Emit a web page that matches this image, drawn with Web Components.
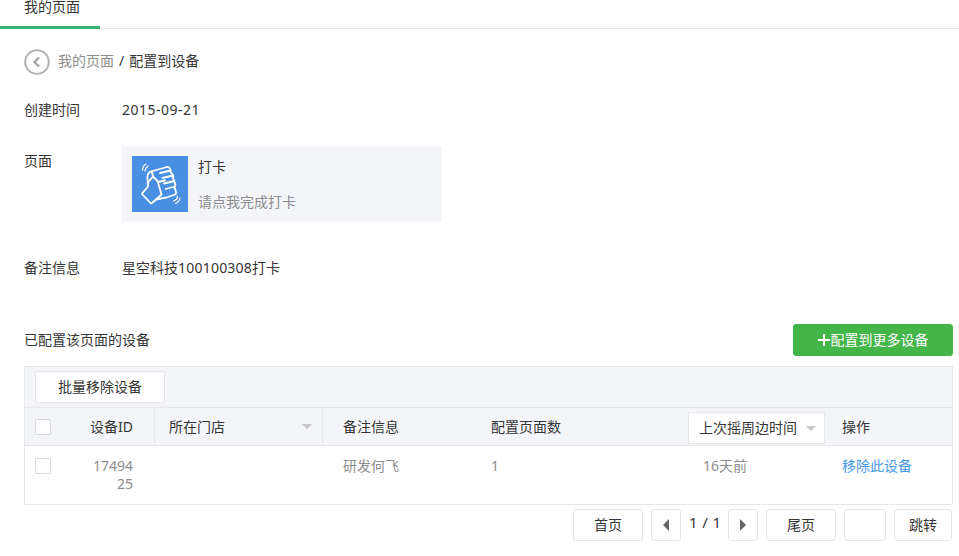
<!DOCTYPE html>
<html lang="zh">
<head>
<meta charset="utf-8">
<title>配置到设备</title>
<style>
  html, body { margin: 0; padding: 0; background: #fff; }
  body { width: 959px; height: 556px; overflow: hidden; font: 14px/20px "Noto Sans", "Noto Sans CJK SC", sans-serif; color: #353535; }
</style>
</head>
<body>
<page-tabs label="我的页面"></page-tabs>
<main-view></main-view>

<script>
class PageTabs extends HTMLElement {
  constructor () {
    super();
    this.attachShadow({ mode: 'open' });
    this.shadowRoot.innerHTML = `<style>
        :host { display: block; height: 29px; border-bottom: 1px solid #e7e7eb; box-sizing: border-box; }
        .tab {
          display: block;
          width: 100px;
          height: 29px;
          box-sizing: border-box;
          padding-left: 24px;
          line-height: 14px;
          color: #353535;
          border-bottom: 3px solid #3cb371;
        }
      </style>
      <div class="tab">${this.getAttribute('label')}</div>`;
  }
}

class BackCrumb extends HTMLElement {
  constructor () {
    super();
    this.attachShadow({ mode: 'open' });
    this.shadowRoot.innerHTML = `<style>
        :host { display: flex; align-items: center; height: 26px; }
        svg { width: 26px; height: 26px; margin-right: 8px; flex: none; }
        span { margin-bottom: 2px; }
        .parent { color: #8d8d8d; }
        .sep { margin: 0 5px 2px 5px; }
      </style>
      <svg viewBox="0 0 26 26" fill="none" stroke="#b2b2b2" stroke-width="2">
        <circle cx="13" cy="13" r="11.8"/>
        <path d="M15 8.500 10.500 13l4.500 4.500" stroke="#a5a5a5" stroke-width="2.400"/>
      </svg>
      <span class="parent">我的页面</span><span class="sep">/</span><span>配置到设备</span>`;
  }
}

class InfoRow extends HTMLElement {
  constructor () {
    super();
    this.attachShadow({ mode: 'open' });
    this.shadowRoot.innerHTML = `<style>
        :host { display: grid; grid-template-columns: 98px 1fr; line-height: 20px; }
      </style>
      <div>${this.getAttribute('label')}</div>
      <div><slot></slot></div>`;
  }
}

class PageCard extends HTMLElement {
  constructor () {
    super();
    this.attachShadow({ mode: 'open' });
    this.shadowRoot.innerHTML = `<style>
        :host { display: flex; width: 320px; height: 76px; box-sizing: border-box; padding: 10px; background: #f4f5f9; }
        .icon { width: 56px; height: 56px; flex: none; margin-right: 10px; background: #4a90e2; }
        .body { display: flex; flex-direction: column; justify-content: space-between; height: 55px; margin-top: 1px; }
        .sub { color: #8d8d8d; }
      </style>
      <svg class="icon" viewBox="0 0 56 56" fill="none" stroke="#fff" stroke-width="1.800" stroke-linecap="round" stroke-linejoin="round">
        <path d="M15.500 22C15 19 16.500 16 19 15.500L35 11C36.500 10.700 37.500 11.500 38 13L39 17C41 18 41.500 20 41 22L42.500 26.500C43.500 28 43.500 30 42.500 31L44 36C44.500 37.500 43.500 38.500 42 39L34.500 41.500 24 43.500 20 47C19.500 47.500 19 47.500 18.500 47L10.500 38.500C10 38 10 37.500 10.500 37L16 30.500 15.500 22Z"/>
        <path d="M15.500 27 21 20.500 25.500 25 29.500 38.500 24 43.500"/>
        <path d="M21 20.500 20 16"/>
        <path d="M28 17 38.500 14.500M30.500 22 41 19.500M32 27.500 42.500 25M33.500 33 43 30.500M26 26 33 24.500"/>
        <path d="M13 15C13.300 12.500 14.500 11 16 10M10.500 14C10.800 11 12 9 14 8" stroke-width="1.200"/>
        <path d="M41.500 45C43.500 44.500 45.500 42.500 45.500 40M43.500 47.500C46 46.500 47.500 44.500 48 42" stroke-width="1.200"/>
      </svg>
      <div class="body"><div><slot name="title"></slot></div><div class="sub"><slot name="sub"></slot></div></div>`;
  }
}

class UiButton extends HTMLElement {
  constructor () {
    super();
    this.attachShadow({ mode: 'open' });
    this.shadowRoot.innerHTML = `<style>
        :host {
          display: inline-flex;
          align-items: center;
          justify-content: center;
          box-sizing: border-box;
          height: 32px;
          background: #fff;
          border: 1px solid #e7e7eb;
          border-radius: 3px;
          color: #353535;
          flex: none;
        }
        :host([primary]) { background: #44b549; border-color: #44b549; color: #fff; }
      </style><slot></slot>`;
  }
}

class CheckBox extends HTMLElement {
  constructor () {
    super();
    this.attachShadow({ mode: 'open' });
    this.shadowRoot.innerHTML = `<style>
        :host { display: block; width: 16px; height: 16px; box-sizing: border-box; background: #fff; border: 1px solid #d9dadc; border-radius: 1px; }
      </style>`;
  }
}

class SortArrow extends HTMLElement {
  constructor () {
    super();
    this.attachShadow({ mode: 'open' });
    this.shadowRoot.innerHTML = `<style>
        :host { display: block; width: 0; height: 0; border-style: solid; border-width: 5px 5px 0; border-color: #c8c8c8 transparent transparent; }
      </style>`;
  }
}

class DeviceTable extends HTMLElement {
  constructor () {
    super();
    this.attachShadow({ mode: 'open' });
    this.shadowRoot.innerHTML = `<style>
        :host { display: block; border: 1px solid #e7e7eb; box-sizing: border-box; width: 929px; height: 139px; }
        .bar { height: 41px; box-sizing: border-box; padding: 4px 10px; background: #f4f5f9; border-bottom: 1px solid #e7e7eb; }
        .bar ui-button { width: 130px; height: 32px; }
        .row { display: grid; grid-template-columns: 129px 169px 148px 207px 154px 1fr; }
        .head { height: 38px; background: #f4f5f9; border-bottom: 1px solid #e7e7eb; box-sizing: border-box; color: #353535; }
        .head > div { display: flex; align-items: center; box-sizing: border-box; height: 37px; }
        .first { padding: 0 21px 0 10px; justify-content: space-between; }
        .store { padding: 0 10px 0 14px; justify-content: space-between; border-left: 1px solid #e7e7eb; border-right: 1px solid #e7e7eb; }
        .plain { padding-left: 20px; }
        .time { padding-left: 10px; }
        .pick {
          display: flex; align-items: center; justify-content: space-between;
          box-sizing: border-box; width: 137px; height: 32px; margin-top: 3px;
          padding: 0 8px 0 10px; background: #fff; border: 1px solid #e7e7eb; white-space: nowrap;
        }
        .op { padding-left: 10px; }
        .body { color: #8d8d8d; }
        .body > div { box-sizing: border-box; padding-top: 11px; line-height: 18px; }
        .id { display: flex; justify-content: space-between; padding-left: 10px; padding-right: 21px; }
        .id check-box { margin-top: 1px; }
        .id .num { width: 42px; text-align: right; word-break: break-all; }
        a { color: #459ae9; text-decoration: none; }
        .ago { padding-left: 25px; }
      </style>
      <div class="bar"><ui-button>批量移除设备</ui-button></div>
      <div class="row head">
        <div class="first"><check-box></check-box><span>设备ID</span></div>
        <div class="store"><span>所在门店</span><sort-arrow></sort-arrow></div>
        <div class="plain">备注信息</div>
        <div class="plain">配置页面数</div>
        <div class="time"><div class="pick"><span>上次摇周边时间</span><sort-arrow></sort-arrow></div></div>
        <div class="op">操作</div>
      </div>
      <div class="row body">
        <div class="id"><check-box></check-box><span class="num">1749425</span></div>
        <div></div>
        <div class="plain">研发何飞</div>
        <div class="plain">1</div>
        <div class="ago">16天前</div>
        <div class="op"><a href="#">移除此设备</a></div>
      </div>`;
  }
}

class PageNav extends HTMLElement {
  constructor () {
    super();
    this.attachShadow({ mode: 'open' });
    this.shadowRoot.innerHTML = `<style>
        :host { display: flex; justify-content: flex-end; align-items: flex-start; gap: 8px; padding-right: 1px; color: #353535; }
        .wide { width: 70px; }
        .arrow { width: 30px; }
        .jump { width: 42px; }
        .go { width: 58px; }
        .count { width: 31px; text-align: center; font-size: 15px; line-height: 26px; white-space: nowrap; letter-spacing: .4px; }
        i { display: block; width: 0; height: 0; border-style: solid; border-color: transparent; }
        .l { border-width: 6px 6px 6px 0; border-right-color: #666; }
        .r { border-width: 6px 0 6px 6px; border-left-color: #666; }
      </style>
      <ui-button class="wide">首页</ui-button>
      <ui-button class="arrow"><i class="l"></i></ui-button>
      <span class="count">1 / 1</span>
      <ui-button class="arrow"><i class="r"></i></ui-button>
      <ui-button class="wide">尾页</ui-button>
      <ui-button class="jump"></ui-button>
      <ui-button class="go">跳转</ui-button>`;
  }
}

class MainView extends HTMLElement {
  constructor () {
    super();
    this.attachShadow({ mode: 'open' });
    this.shadowRoot.innerHTML = `<style>
        :host { display: block; padding: 20px 6px 0 24px; }
        info-row.time { margin-top: 25px; }
        info-row.page { margin-top: 31px; }
        info-row.note { margin-top: 36px; }
        page-card { margin-top: -5px; }
        .title { display: flex; justify-content: space-between; align-items: center; margin-top: 46px; height: 32px; }
        .title ui-button { width: 160px; }
        .plus { width: 12px; height: 12px; margin-right: 1px; flex: none; }
        device-table { margin-top: 10px; }
        page-nav { margin-top: 4px; }
        .date { letter-spacing: .5px; }
        .digits { letter-spacing: .22px; }
      </style>
      <back-crumb></back-crumb>
      <info-row class="time" label="创建时间"><span class="date">2015-09-21</span></info-row>
      <info-row class="page" label="页面">
        <page-card>
          <span slot="title">打卡</span>
          <span slot="sub">请点我完成打卡</span>
        </page-card>
      </info-row>
      <info-row class="note" label="备注信息">星空科技<span class="digits">100100308</span>打卡</info-row>
      <div class="title">
        <span>已配置该页面的设备</span>
        <ui-button primary><svg class="plus" viewBox="0 0 12 12" fill="#fff"><path d="M5 0h2v5h5v2H7v5H5V7H0V5h5z"/></svg>配置到更多设备</ui-button>
      </div>
      <device-table></device-table>
      <page-nav></page-nav>`;
  }
}

customElements.define('page-tabs', PageTabs);
customElements.define('back-crumb', BackCrumb);
customElements.define('info-row', InfoRow);
customElements.define('page-card', PageCard);
customElements.define('ui-button', UiButton);
customElements.define('check-box', CheckBox);
customElements.define('sort-arrow', SortArrow);
customElements.define('device-table', DeviceTable);
customElements.define('page-nav', PageNav);
customElements.define('main-view', MainView);
</script>
</body>
</html>
